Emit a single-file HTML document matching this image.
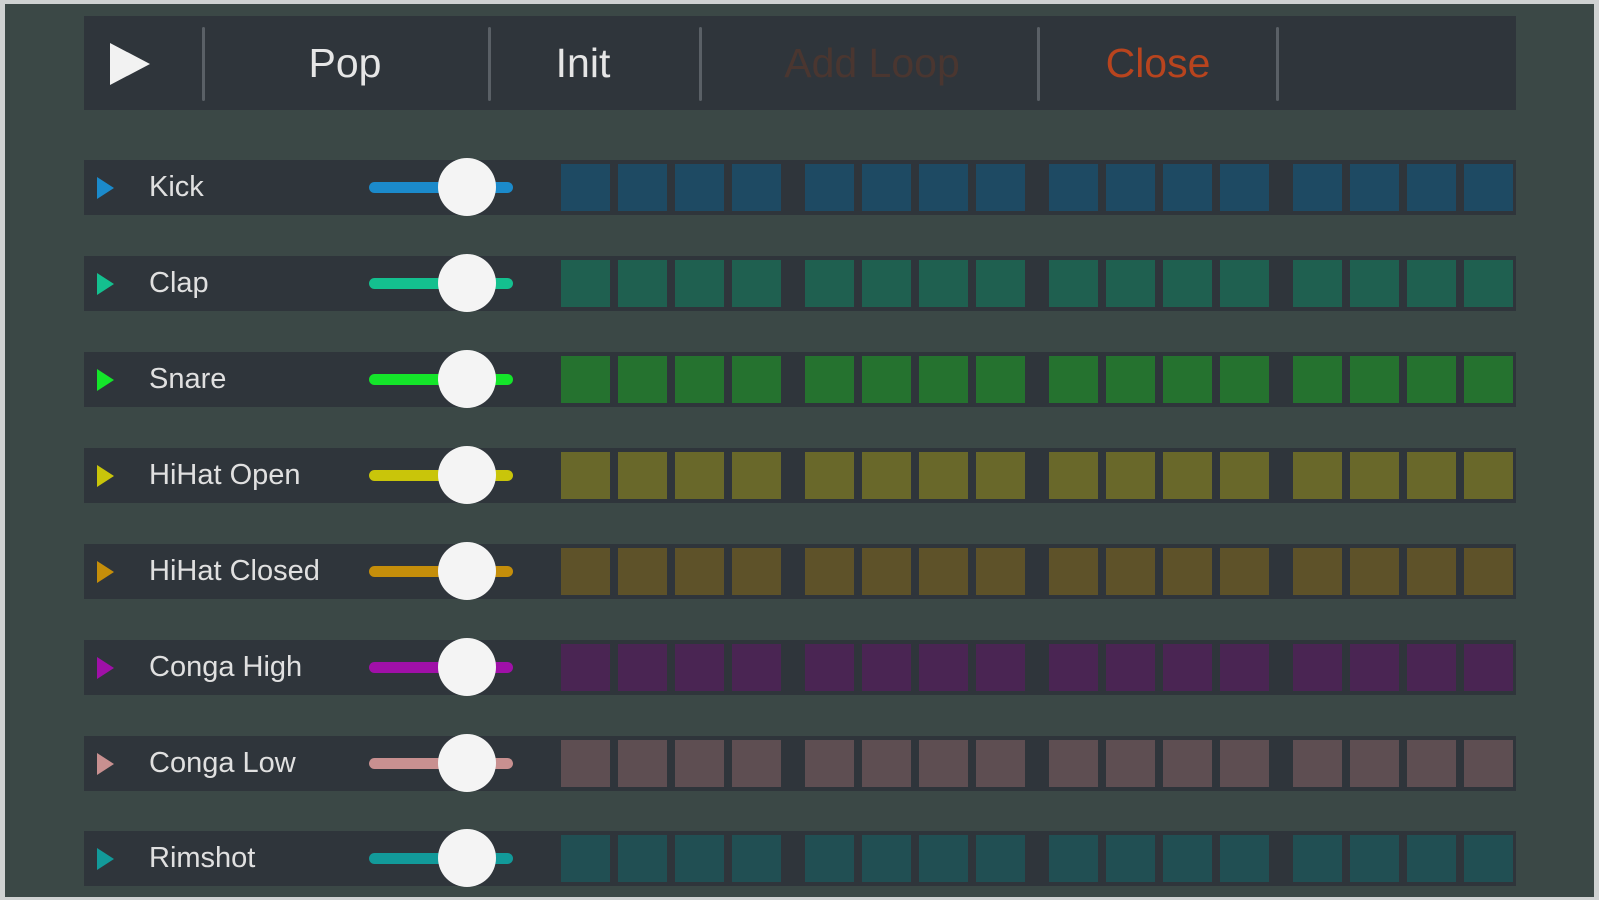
<!DOCTYPE html>
<html><head><meta charset="utf-8"><style>
*{margin:0;padding:0;box-sizing:border-box}
body{width:1599px;height:900px;background:#cfd2d2;overflow:hidden;font-family:"Liberation Sans",sans-serif;position:relative}
.frame{position:absolute;left:5px;top:4px;width:1589px;height:893px;background:#3b4846}
.tb{position:absolute;left:84px;top:16px;width:1432px;height:94px;background:#2f353b}
.sep{position:absolute;top:11px;width:3px;height:74px;background:#5a6066;border-radius:2px}
.bt{position:absolute;top:0;height:94px;line-height:94px;font-size:41px;color:#e6e6e6;transform:translateX(-50%)}
.row{position:absolute;left:84px;width:1432px;height:55px;background:#2f353b}
.tri{position:absolute;left:13px;top:17px;width:0;height:0;border-top:11px solid transparent;border-bottom:11px solid transparent;border-left:17px solid}
.lbl{position:absolute;left:65px;top:0;line-height:55px;font-size:29px;color:#e0e0e0}
.trk{position:absolute;left:285px;top:22px;width:144px;height:11px;border-radius:6px}
.knob{position:absolute;left:354px;top:-2px;width:58px;height:58px;border-radius:50%;background:#f4f4f4}
.grid{position:absolute;left:477px;top:4px;display:flex;gap:24px}
.g{display:flex;gap:8px}
.g i{display:block;width:49px;height:47px}
</style></head><body>
<div class="frame"></div>
<div class="tb">
<div style="position:absolute;left:26px;top:27px;border-top:21px solid transparent;border-bottom:21px solid transparent;border-left:40px solid #f2f2f2"></div>
<div class="sep" style="left:118px"></div>
<div class="bt" style="left:261px">Pop</div>
<div class="sep" style="left:404px"></div>
<div class="bt" style="left:499px">Init</div>
<div class="sep" style="left:615px"></div>
<div class="bt" style="left:788px;color:#4a3630">Add Loop</div>
<div class="sep" style="left:953px"></div>
<div class="bt" style="left:1074px;color:#b8441e">Close</div>
<div class="sep" style="left:1192px"></div>
</div>

<div class="row" style="top:160px"><div class="tri" style="border-left-color:#1b8acb"></div><div class="lbl">Kick</div><div class="trk" style="background:#1b8acb"></div><div class="knob"></div>
<div class="grid" style="color:#1e4a63"><div class="g"><i style="background:#1e4a63"></i><i style="background:#1e4a63"></i><i style="background:#1e4a63"></i><i style="background:#1e4a63"></i></div><div class="g"><i style="background:#1e4a63"></i><i style="background:#1e4a63"></i><i style="background:#1e4a63"></i><i style="background:#1e4a63"></i></div><div class="g"><i style="background:#1e4a63"></i><i style="background:#1e4a63"></i><i style="background:#1e4a63"></i><i style="background:#1e4a63"></i></div><div class="g"><i style="background:#1e4a63"></i><i style="background:#1e4a63"></i><i style="background:#1e4a63"></i><i style="background:#1e4a63"></i></div></div></div>

<div class="row" style="top:256px"><div class="tri" style="border-left-color:#14c08f"></div><div class="lbl">Clap</div><div class="trk" style="background:#14c08f"></div><div class="knob"></div>
<div class="grid"><div class="g"><i style="background:#1f6050"></i><i style="background:#1f6050"></i><i style="background:#1f6050"></i><i style="background:#1f6050"></i></div><div class="g"><i style="background:#1f6050"></i><i style="background:#1f6050"></i><i style="background:#1f6050"></i><i style="background:#1f6050"></i></div><div class="g"><i style="background:#1f6050"></i><i style="background:#1f6050"></i><i style="background:#1f6050"></i><i style="background:#1f6050"></i></div><div class="g"><i style="background:#1f6050"></i><i style="background:#1f6050"></i><i style="background:#1f6050"></i><i style="background:#1f6050"></i></div></div></div>

<div class="row" style="top:352px"><div class="tri" style="border-left-color:#14e52a"></div><div class="lbl">Snare</div><div class="trk" style="background:#14e52a"></div><div class="knob"></div>
<div class="grid"><div class="g"><i style="background:#25722f"></i><i style="background:#25722f"></i><i style="background:#25722f"></i><i style="background:#25722f"></i></div><div class="g"><i style="background:#25722f"></i><i style="background:#25722f"></i><i style="background:#25722f"></i><i style="background:#25722f"></i></div><div class="g"><i style="background:#25722f"></i><i style="background:#25722f"></i><i style="background:#25722f"></i><i style="background:#25722f"></i></div><div class="g"><i style="background:#25722f"></i><i style="background:#25722f"></i><i style="background:#25722f"></i><i style="background:#25722f"></i></div></div></div>

<div class="row" style="top:448px"><div class="tri" style="border-left-color:#c9c50a"></div><div class="lbl">HiHat Open</div><div class="trk" style="background:#c9c50a"></div><div class="knob"></div>
<div class="grid"><div class="g"><i style="background:#69682a"></i><i style="background:#69682a"></i><i style="background:#69682a"></i><i style="background:#69682a"></i></div><div class="g"><i style="background:#69682a"></i><i style="background:#69682a"></i><i style="background:#69682a"></i><i style="background:#69682a"></i></div><div class="g"><i style="background:#69682a"></i><i style="background:#69682a"></i><i style="background:#69682a"></i><i style="background:#69682a"></i></div><div class="g"><i style="background:#69682a"></i><i style="background:#69682a"></i><i style="background:#69682a"></i><i style="background:#69682a"></i></div></div></div>

<div class="row" style="top:544px"><div class="tri" style="border-left-color:#c58e0a"></div><div class="lbl">HiHat Closed</div><div class="trk" style="background:#c58e0a"></div><div class="knob"></div>
<div class="grid"><div class="g"><i style="background:#5e5229"></i><i style="background:#5e5229"></i><i style="background:#5e5229"></i><i style="background:#5e5229"></i></div><div class="g"><i style="background:#5e5229"></i><i style="background:#5e5229"></i><i style="background:#5e5229"></i><i style="background:#5e5229"></i></div><div class="g"><i style="background:#5e5229"></i><i style="background:#5e5229"></i><i style="background:#5e5229"></i><i style="background:#5e5229"></i></div><div class="g"><i style="background:#5e5229"></i><i style="background:#5e5229"></i><i style="background:#5e5229"></i><i style="background:#5e5229"></i></div></div></div>

<div class="row" style="top:640px"><div class="tri" style="border-left-color:#a010a8"></div><div class="lbl">Conga High</div><div class="trk" style="background:#a010a8"></div><div class="knob"></div>
<div class="grid"><div class="g"><i style="background:#4a2553"></i><i style="background:#4a2553"></i><i style="background:#4a2553"></i><i style="background:#4a2553"></i></div><div class="g"><i style="background:#4a2553"></i><i style="background:#4a2553"></i><i style="background:#4a2553"></i><i style="background:#4a2553"></i></div><div class="g"><i style="background:#4a2553"></i><i style="background:#4a2553"></i><i style="background:#4a2553"></i><i style="background:#4a2553"></i></div><div class="g"><i style="background:#4a2553"></i><i style="background:#4a2553"></i><i style="background:#4a2553"></i><i style="background:#4a2553"></i></div></div></div>

<div class="row" style="top:736px"><div class="tri" style="border-left-color:#c89090"></div><div class="lbl">Conga Low</div><div class="trk" style="background:#c89090"></div><div class="knob"></div>
<div class="grid"><div class="g"><i style="background:#5e4e52"></i><i style="background:#5e4e52"></i><i style="background:#5e4e52"></i><i style="background:#5e4e52"></i></div><div class="g"><i style="background:#5e4e52"></i><i style="background:#5e4e52"></i><i style="background:#5e4e52"></i><i style="background:#5e4e52"></i></div><div class="g"><i style="background:#5e4e52"></i><i style="background:#5e4e52"></i><i style="background:#5e4e52"></i><i style="background:#5e4e52"></i></div><div class="g"><i style="background:#5e4e52"></i><i style="background:#5e4e52"></i><i style="background:#5e4e52"></i><i style="background:#5e4e52"></i></div></div></div>

<div class="row" style="top:831px"><div class="tri" style="border-left-color:#129a9a"></div><div class="lbl">Rimshot</div><div class="trk" style="background:#129a9a"></div><div class="knob"></div>
<div class="grid"><div class="g"><i style="background:#214f53"></i><i style="background:#214f53"></i><i style="background:#214f53"></i><i style="background:#214f53"></i></div><div class="g"><i style="background:#214f53"></i><i style="background:#214f53"></i><i style="background:#214f53"></i><i style="background:#214f53"></i></div><div class="g"><i style="background:#214f53"></i><i style="background:#214f53"></i><i style="background:#214f53"></i><i style="background:#214f53"></i></div><div class="g"><i style="background:#214f53"></i><i style="background:#214f53"></i><i style="background:#214f53"></i><i style="background:#214f53"></i></div></div></div>
</body></html>
